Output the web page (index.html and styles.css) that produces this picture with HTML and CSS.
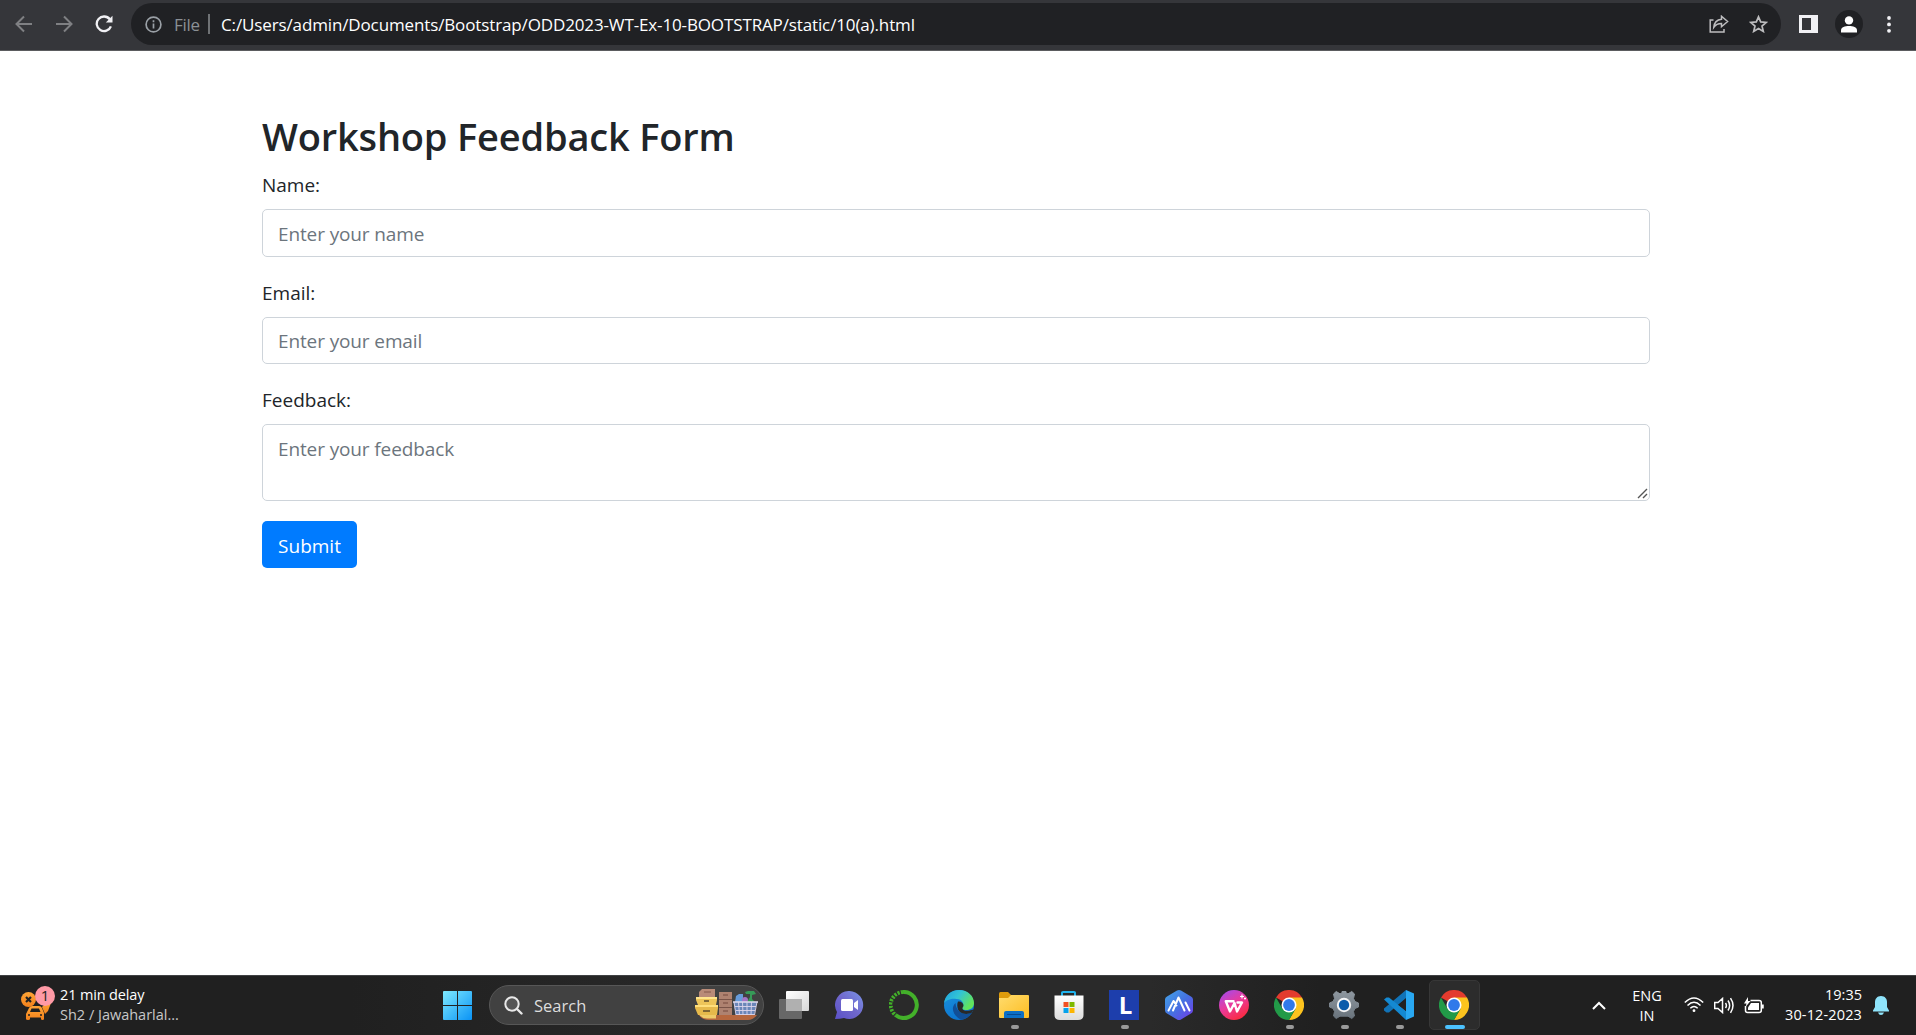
FILE: index.html
```html
<!DOCTYPE html>
<html lang="en">
<head>
<meta charset="utf-8">
<title>Workshop Feedback Form</title>
<link rel="stylesheet" href="styles.css">
</head>
<body>
<svg class="defs" aria-hidden="true">
  <defs>
    <linearGradient id="winG" x1="0" y1="0" x2="1" y2="1"><stop offset="0" stop-color="#7eeaff"/><stop offset="1" stop-color="#0a93f5"/></linearGradient>
    <linearGradient id="chatG" x1="1" y1="0" x2="0" y2="1"><stop offset="0" stop-color="#7a95e8"/><stop offset=".5" stop-color="#7068cc"/><stop offset="1" stop-color="#5a50c8"/></linearGradient>
    <linearGradient id="edgeTop" x1="0" y1="0" x2="1" y2=".5"><stop offset="0" stop-color="#1d9fe0"/><stop offset=".5" stop-color="#32c4d5"/><stop offset="1" stop-color="#62e35b"/></linearGradient>
    <linearGradient id="edgeL" x1="0" y1="0" x2=".6" y2="1"><stop offset="0" stop-color="#1b93dc"/><stop offset="1" stop-color="#0a72cf"/></linearGradient>
    <linearGradient id="foldG" x1="0" y1="0" x2="1" y2="1"><stop offset="0" stop-color="#ffdc6e"/><stop offset="1" stop-color="#fdbd22"/></linearGradient>
    <linearGradient id="bagG" x1="0" y1="0" x2="0" y2="1"><stop offset="0" stop-color="#fff"/><stop offset="1" stop-color="#dcdcdc"/></linearGradient>
    <linearGradient id="hexG" x1="0" y1="0" x2="1" y2="1"><stop offset="0" stop-color="#44a5e8"/><stop offset=".5" stop-color="#4472e2"/><stop offset="1" stop-color="#7438e8"/></linearGradient>
    <linearGradient id="wpsG" x1=".1" y1="0" x2=".7" y2="1"><stop offset="0" stop-color="#a04cf0"/><stop offset=".5" stop-color="#ea3a9b"/><stop offset="1" stop-color="#fb2a3c"/></linearGradient>
    <linearGradient id="gearG" x1="0" y1="0" x2="0" y2="1"><stop offset="0" stop-color="#8e979f"/><stop offset="1" stop-color="#69737c"/></linearGradient>
    <linearGradient id="tvG" x1="0" y1="0" x2="1" y2="1"><stop offset="0" stop-color="#fff"/><stop offset="1" stop-color="#d8d8d8"/></linearGradient>
    <linearGradient id="carG" x1="0" y1="0" x2="0" y2="1"><stop offset="0" stop-color="#ffa536"/><stop offset="1" stop-color="#f2811c"/></linearGradient>
    <symbol id="chrome" viewBox="0 0 30 30">
      <path d="M15 15 2 7.500A15 15 0 0 1 28 7.500Z" fill="#e33b2e"/>
      <path d="M15 7.500H28A15 15 0 0 1 15 30L21.500 18.700Z" fill="#fcc31e"/>
      <path d="M2 7.500A15 15 0 0 0 15 30L21.500 18.700 15 22 8.500 18.700Z" fill="#229a48"/>
      <circle cx="15" cy="15" r="7.500" fill="#fff"/><circle cx="15" cy="15" r="5.900" fill="#3079ea"/>
    </symbol>
  </defs>
</svg>

<header class="toolbar">
  <div class="nav">
    <svg width="18" height="18" viewBox="0 0 18 18" class="dim"><path d="M17 9H1.500M9 1.500 1.500 9 9 16.500"/></svg>
    <svg width="18" height="18" viewBox="0 0 18 18" class="dim"><path d="M1 9h15.500M9 1.500 16.500 9 9 16.500"/></svg>
    <svg width="18" height="18" viewBox="0 0 18 18" class="reload"><path d="M14.800 4.300A7.300 7.300 0 1 0 15.900 11.300"/><path d="M17.500.8v6.700h-6.700Z" class="tip"/></svg>
  </div>
  <div class="omnibox">
    <svg class="info" width="17" height="17" viewBox="0 0 17 17"><circle cx="8.500" cy="8.500" r="7.400"/><path d="M8.500 7.500v5M8.500 4.200v2"/></svg>
    <span class="scheme">File</span>
    <span class="sep"></span>
    <span class="url">C:/Users/admin/Documents/Bootstrap/ODD2023-WT-Ex-10-BOOTSTRAP/static/10(a).html</span>
    <svg class="share" width="20" height="18" viewBox="0 0 20 18"><path d="M4.500 5H1.200v12H15v-3"/><path d="M12.500 1.200 18.600 6.500l-6.100 5.200V8.600C8.500 8.600 6.600 9.800 4.800 12.300 5.200 8 8 4.800 12.500 4.300Z"/></svg>
    <svg class="star" width="19" height="18" viewBox="0 0 19 18"><path d="m9.500 1.800 2.200 5.100 5.500.5-4.200 3.600 1.300 5.400-4.800-2.900-4.800 2.900L6 11 1.800 7.400l5.500-.5Z"/></svg>
  </div>
  <div class="actions">
    <svg width="19" height="18" viewBox="0 0 19 18"><path d="M0 0h19v18H0ZM3 3v12h9V3Z" fill="#f1f1f4" fill-rule="evenodd"/></svg>
    <span class="avatar"><svg width="16" height="17" viewBox="0 0 16 17" fill="#fff"><circle cx="8" cy="4.400" r="4.200"/><path d="M0 16.500v-2.200C0 11.300 4 10 8 10s8 1.300 8 4.300v2.200Z"/></svg></span>
    <svg width="4" height="17" viewBox="0 0 4 17" fill="#f1f1f4"><circle cx="2" cy="2" r="1.900"/><circle cx="2" cy="8.400" r="1.900"/><circle cx="2" cy="14.800" r="1.900"/></svg>
  </div>
</header>

<main class="page">
  <h2>Workshop Feedback Form</h2>
  <form class="form">
    <div class="group"><label for="name">Name:</label><input id="name" class="control" type="text" placeholder="Enter your name"></div>
    <div class="group"><label for="email">Email:</label><input id="email" class="control" type="text" placeholder="Enter your email"></div>
    <div class="group"><label for="feedback">Feedback:</label>
      <div class="area"><textarea id="feedback" class="control" placeholder="Enter your feedback"></textarea>
      <svg class="grip" width="11" height="11" viewBox="0 0 11 11"><path d="M1 10 10 1M6 10l4-4"/></svg></div></div>
    <button class="submit" type="button">Submit</button>
  </form>
</main>

<footer class="taskbar">
  <div class="widget">
    <svg width="34" height="38" viewBox="0 0 34 38">
      <path d="M21 21 24 18l6-1-3 8-3 3Z" fill="url(#carG)"/>
      <path d="M5 28 8 22Q9 20 11 20H18Q20 20 21 22L23 27V33Q23 34 21.500 34T20 33V31.500H9V33Q9 34 7 34T5 33Z" fill="url(#carG)"/>
      <path d="M9 26 10.500 22.500H18L19.500 26Z" fill="#202020"/><circle cx="8" cy="29" r="1" fill="#202020"/><circle cx="20" cy="29" r="1" fill="#202020"/>
      <circle cx="7.500" cy="13.500" r="7.500" fill="url(#carG)"/><path d="m5 11 5 5m0-5-5 5" stroke="#222" stroke-width="2.200"/>
      <circle cx="24" cy="10" r="10" fill="#ff9aa6"/><text x="24" y="15" text-anchor="middle" class="badge">1</text>
    </svg>
    <div class="lines"><span class="headline">21 min delay</span><span class="sub">Sh2 / Jawaharlal...</span></div>
  </div>
  <div class="slot"><svg width="29" height="29" viewBox="0 0 29 29"><path d="M1 0H14V14H0V1Q0 0 1 0ZM15 0H28Q29 0 29 1V14H15ZM0 15H14V29H1Q0 29 0 28ZM15 15H29V28Q29 29 28 29H15Z" fill="url(#winG)"/></svg></div>
  <div class="search">
    <svg width="19" height="19" viewBox="0 0 19 19"><circle cx="8" cy="8" r="6.700" fill="#555" stroke="#e8e8e8" stroke-width="2"/><path d="m13 13 4.500 4.500" stroke="#e8e8e8" stroke-width="2.400" stroke-linecap="round"/></svg>
    <span>Search</span>
    <svg class="boxes" width="63" height="32" viewBox="0 0 63 32">
      <path d="M4 26H62Q58 31 53 31H14Q7 31 4 26Z" fill="#b5673f"/>
      <path d="M3 24H21V29.500H12Q6 29.500 3 24Z" fill="#efcb68"/>
      <path d="M4 3 7 0H20V8H4Z" fill="#b98b78"/><path d="M9 3h7" stroke="#84594a"/>
      <path d="M1 8H22V11L21 16H3L1 11Z" fill="#eec559"/><path d="M1 9H22" stroke="#ffe58c" stroke-width="2"/>
      <path d="M0 16H23V19L22 26H3L0 19Z" fill="#e6b94b"/><path d="M0 17H23" stroke="#ffdf7c" stroke-width="2"/>
      <path d="M9 12h5M8 22h7" stroke="#5e4b2c" stroke-width="1.500"/>
      <path d="M24 3H37V26H24Z" fill="#ae8270"/><path d="M24 10.500H37M24 18.500H37" stroke="#795347"/><path d="M28 6h5m-5 8h5m-5 8h5" stroke="#74493d" stroke-width="1.200"/>
      <path d="M41 7 44 5h4v8H40Z" fill="#669bda"/><path d="M50 3 53 2h6l2 3-4 1v4l3 3H52l3-5V5H51Z" fill="#379a58"/>
      <circle cx="50" cy="11" r="3" fill="#a374c4"/>
      <path d="M38.500 13H62L59 26H41Z" fill="#6a86b8"/><path d="M38 13H63" stroke="#e2dcf0" stroke-width="1.500"/><path d="M39 13 41 26M43.500 13 44.500 26M47.500 13 48 26M52 13V26M56.500 13 56 26M62 13 59.500 26M40 17.500H61M41 21.500H60M41 25.500H59.500" stroke="#dcd6ec" stroke-width=".9"/>
    </svg>
  </div>
  <nav class="apps">
    <div class="slot"><svg width="30" height="28" viewBox="0 0 30 28"><rect x="7" y="0" width="23" height="20" rx="1" fill="url(#tvG)"/><rect x="0" y="8" width="23" height="20" rx="1" fill="#777" fill-opacity=".8"/><path d="M7 8h16v12H7Z" fill="#b0b0b0"/></svg></div>
    <div class="slot"><svg width="29" height="28" viewBox="0 0 29 28"><path d="M14.500 0A14 14 0 1 1 9 27Q5 28 0 28L2 21A14 14 0 0 1 14.500 0Z" fill="url(#chatG)"/><rect x="6" y="8" width="12" height="12" rx="1.500" fill="#fff"/><path d="M19 12 23 9V19L19 16Z" fill="#fff"/></svg></div>
    <div class="slot"><svg width="30" height="30" viewBox="0 0 30 30" fill="none" stroke="#43b02a" stroke-width="4"><path d="M14 2A13 13 0 1 1 6.500 25"/><path d="M14 2A13 13 0 0 0 6.500 25" stroke-dasharray="2.200 1.200"/><path d="M12.500 4.500A11 11 0 0 0 6 22" stroke="#292929" stroke-width="1" stroke-dasharray="2 2.200"/></svg></div>
    <div class="slot"><svg width="30" height="30" viewBox="0 0 30 30"><circle cx="15" cy="15" r="15" fill="url(#edgeL)"/><path d="M0 13.500C1 5 7.500 0 15 0 24 0 30 6 30 13c0 5-4 7-7.500 7-4 0-5-1.500-4-3 2-3 0-8-6-8C6 8 1 11 0 13.500Z" fill="url(#edgeTop)"/><path d="M11.500 13C7 17 8 25 17 29.800 22 29 26 26 28 22.500 20 26 12 22 11.500 13Z" fill="#114f97"/><path d="M14 11.500c3-.5 5.500 1.500 5.500 4 0 1.500-1.500 2-1 3.500 1 2.500 6 2 11 .5l-1.500 3c-6 3-12 1-14-3-1-3-1-6 0-8Z" fill="#292929"/></svg></div>
    <div class="slot run"><svg width="30" height="27" viewBox="0 0 30 27"><path d="M0 1.500Q0 0 1.500 0H9L13 4V9H0Z" fill="#dd9b0c"/><path d="M0 6H9L12 3H29Q30 3 30 4V25Q30 26 29 26H1Q0 26 0 25Z" fill="url(#foldG)"/><path d="M5 26V21Q5 19 7 19H23Q25 19 25 21V26Z" fill="#0c6fc5"/><path d="M8 22.500H22" stroke="#064b91"/></svg></div>
    <div class="slot"><svg width="30" height="30" viewBox="0 0 30 30"><path d="M8 7V2.500Q8 2 9 2H20Q21 2 21 2.500V7" fill="none" stroke="#21b4ee" stroke-width="2"/><path d="M.5 5.500H29.500V25Q29.500 30 24 30H6Q.5 30 .5 25Z" fill="url(#bagG)"/><path d="M9.500 12h5v5h-5Z" fill="#f15022"/><path d="M15.500 12h5v5h-5Z" fill="#7db900"/><path d="M9.500 18h5v5h-5Z" fill="#06a2ec"/><path d="M15.500 18h5v5h-5Z" fill="#fcb500"/></svg></div>
    <div class="slot run"><span class="ltile">L</span></div>
    <div class="slot"><svg width="28" height="30" viewBox="0 0 28 30"><path d="M12 .6Q14-.4 16 .6L26 6.500Q28 7.500 28 9.500V20.500Q28 22.500 26 23.500L16 29.400Q14 30.400 12 29.400L2 23.500Q0 22.500 0 20.500V9.500Q0 7.500 2 6.500Z" fill="url(#hexG)"/><path d="M3.500 20.500 8.500 11M8 20.500 13.500 7.500l6 13M20.500 12.500l4 8M9 11.500l2.500 4" fill="none" stroke="#fff" stroke-width="2" stroke-linecap="round" stroke-linejoin="round"/></svg></div>
    <div class="slot"><svg width="30" height="30" viewBox="0 0 30 30"><circle cx="15" cy="15" r="15" fill="url(#wpsG)"/><path d="M14.500 11.200H6.800L11 21.500 15.500 13 18 21.500 23 12.500H18.500" fill="none" stroke="#fff" stroke-width="2.400" stroke-linejoin="round" stroke-linecap="round"/><path d="M23 4.500v4m-2-2h4M26 7.500v2m-1-1h2" stroke="#fff" stroke-width="1.200"/></svg></div>
    <div class="slot run"><svg width="30" height="30"><use href="#chrome"/></svg></div>
    <div class="slot run"><svg width="30" height="30" viewBox="0 0 30 30"><path d="M7.200 1.500 11 3.800 13 3V1.500H17V3L19 3.800 22.800 1.500 25.500 4 24.500 8.500 26 11.500 29.500 13V17L26 18.500 24.500 21.500 25.500 26 22.800 28.500 19 26.200H11L7.200 28.500 4.500 26 5.500 21.500 4 18.500 .5 17V13L4 11.500 5.500 8.500 4.500 4Z" fill="url(#gearG)" stroke="url(#gearG)" stroke-linejoin="round" stroke-width="1"/><circle cx="15" cy="15" r="7.200" fill="#f5f5f5"/><circle cx="15" cy="15" r="5.200" fill="#0b5cab"/></svg></div>
    <div class="slot run"><svg width="30" height="30" viewBox="0 0 30 30"><path d="M22 0V8L5 22.500H2.500L0 20.500V18.500Z" fill="#1173b7"/><path d="M0 9.500 2.500 7.500H5L22 21V30Z" fill="#1489d2"/><path d="M22 0 30 3.500V26.500L22 30Z" fill="#29a8f2"/><path d="M22 9V21L14.500 15Z" fill="#222"/></svg></div>
    <div class="slot run active"><svg width="30" height="30"><use href="#chrome"/></svg></div>
  </nav>
  <div class="tray">
    <svg class="chev" width="14" height="9" viewBox="0 0 14 9"><path d="m1 8 6-6 6 6"/></svg>
    <div class="lines lang"><span>ENG</span><span>IN</span></div>
    <div class="status">
      <svg width="20" height="16" viewBox="0 0 20 16"><path d="M.8 5.500Q10-3.500 19.200 5.500M3.500 8.500Q10 2 16.500 8.500M6.300 11.300Q10 7.800 13.700 11.300"/><circle cx="10" cy="13.700" r="1.400" class="full"/></svg>
      <svg width="20" height="17" viewBox="0 0 20 17"><path d="M.7 5.500H4L8.500 1.500V15.500L4 11.500H.7ZM11.500 6Q13.300 8.500 11.500 11M14 3.500Q17.300 8.500 14 13.500M16.500 1.200Q21.500 8.500 16.500 15.800"/></svg>
      <svg width="20" height="17" viewBox="0 0 20 17"><path d="M6.500 3.500H15Q17.300 3.500 17.300 5.500V13.500Q17.300 15.500 15 15.500H3.500Q1.500 15.500 1.500 13.500V9"/><path d="M7 6H15V13H4V10.500Z" class="full"/><path d="M18.500 7.500V11.500" stroke-width="2.500"/><path d="M4 0 0 6.500H2.500L1.500 10 6.500 4H4Z" class="full"/></svg>
    </div>
    <div class="lines clock"><span>19:35</span><span class="date">30-12-2023</span></div>
    <svg class="bell" width="16" height="19" viewBox="0 0 16 19"><path d="M8 0C4 0 2 3 2 6V11L0 14.500V15.500H16V14.500L14 11V6C14 3 12 0 8 0ZM5 16.500H11Q10 19 8 19T5 16.500Z" fill="#8fe4fb"/></svg>
  </div>
</footer>
</body>
</html>
```
FILE: styles.css
```css
* { box-sizing: border-box; }
body {
  margin: 0;
  height: 1035px;
  overflow: hidden;
  display: flex;
  flex-direction: column;
  background: #fff;
  color: #212529;
  font-family: "Open Sans", "Noto Sans", sans-serif;
}
svg { display: block; flex: none; }
.defs { position: absolute; width: 0; height: 0; }

.toolbar {
  height: 51px;
  flex: none;
  display: flex;
  align-items: flex-start;
  background: #35363a;
  border-bottom: 1px solid #5b5c5f;
}
.nav {
  width: 131px;
  height: 48px;
  padding-left: 15px;
  display: flex;
  align-items: center;
  gap: 22px;
}
.nav svg { fill: none; stroke-width: 2; }
.nav .dim { stroke: #7f8083; }
.nav .reload { stroke: #f1f1f4; stroke-width: 2.3; }
.nav .tip { fill: #f1f1f4; stroke: none; }
.omnibox {
  width: 1650px;
  height: 42px;
  margin-top: 3px;
  padding: 0 13px 0 14px;
  border-radius: 21px;
  background: #202124;
  display: flex;
  align-items: center;
  white-space: nowrap;
  font-size: 17px;
}
.info { fill: none; stroke: #9aa0a6; stroke-width: 1.7; }
.scheme { margin-left: 12px; width: 34px; color: #8b9095; letter-spacing: -.3px; }
.sep { width: 2px; height: 20px; background: #6f7275; }
.url { margin-left: 11px; color: #fff; letter-spacing: -.13px; }
.share, .star { fill: none; stroke: #bdbdbf; stroke-width: 1.5; }
.share { margin-left: auto; }
.star { margin-left: 20px; stroke-width: 1.7; }
.actions {
  height: 48px;
  display: flex;
  align-items: center;
  padding-left: 18px;
}
.avatar {
  width: 28px;
  height: 28px;
  margin: 0 24px 0 17px;
  border-radius: 50%;
  background: #202124;
  display: grid;
  place-items: center;
}

.page { flex: 1; padding: 60px 266px 0 262px; }
h2 {
  margin: 0 0 8px;
  font-size: 38px;
  line-height: 50px;
  font-weight: 600;
  letter-spacing: -.18px;
}
.form { display: flex; flex-direction: column; align-items: stretch; }
.group { display: flex; flex-direction: column; margin-bottom: 20px; }
.group label { font-size: 19px; line-height: 32px; margin-bottom: 8px; }
.control {
  display: block;
  width: 100%;
  height: 47.5px;
  padding: 8.5px 15px 6.5px;
  border: 1px solid #ced4da;
  border-radius: 5px;
  background: #fff;
  font: 19px/30px "Open Sans", "Noto Sans", sans-serif;
  letter-spacing: -.12px;
}
.control::placeholder { color: #6c757d; opacity: 1; }
.area { position: relative; }
textarea.control { height: 77px; resize: none; overflow: hidden; }
.grip { position: absolute; right: 2px; bottom: 2px; fill: none; stroke: #555; stroke-width: 1.4; }
.submit {
  align-self: flex-start;
  width: 95px;
  height: 47px;
  padding: 2px 0 0;
  border: 0;
  border-radius: 5px;
  background: #007bff;
  color: #fff;
  font: 19px/30px "Open Sans", "Noto Sans", sans-serif;
}

.taskbar {
  height: 60px;
  flex: none;
  display: flex;
  align-items: center;
  padding-bottom: 1px;
  border-top: 1px solid #404244;
  background: linear-gradient(90deg, #202020 0, #202020 350px, #2a2a2a 760px, #2a2a2a 1150px, #202020 1320px);
  color: #fff;
  font-size: 14.5px;
}
.widget { width: 430px; padding-left: 21px; display: flex; align-items: center; gap: 5px; }
.badge { font: 15px "Open Sans", sans-serif; fill: #222; }
.lines { display: flex; flex-direction: column; line-height: 20px; white-space: nowrap; }
.headline { letter-spacing: -.15px; }
.sub { color: #c8c8c8; }
.slot { position: relative; width: 55px; height: 50px; display: grid; place-items: center; }
.search {
  width: 275px;
  height: 40px;
  margin-left: 4px;
  padding: 0 5px 0 14px;
  border: 1px solid #575757;
  border-radius: 20px;
  background: #414141;
  display: flex;
  align-items: center;
  font-size: 16.5px;
  color: #ddd;
}
.search span { margin-left: 11px; }
.boxes { margin-left: auto; }
.apps { display: flex; margin-left: 2.5px; }
.run::after {
  content: "";
  position: absolute;
  left: 24px;
  bottom: 1px;
  width: 8px;
  height: 4px;
  border-radius: 2px;
  background: #9a9a9a;
}
.active::before {
  content: "";
  position: absolute;
  inset: 0 2px;
  border: 1px solid #373737;
  border-radius: 5px;
  background: #2c2c2c;
}
.active svg { position: relative; }
.active::after { left: 18px; width: 20px; background: #4cc2ff; }
.ltile {
  width: 30px;
  height: 30px;
  background: #1d3eac;
  font: bold 24px/29px "Open Sans", sans-serif;
  text-align: center;
  padding-left: 3px;
}
.tray { margin-left: auto; padding-right: 27px; display: flex; align-items: center; }
.chev { fill: none; stroke: #fff; stroke-width: 2; }
.lang { align-items: center; width: 40px; margin-left: 21px; padding-top: 2px; }
.status { display: flex; align-items: center; gap: 10px; margin-left: 17px; }
.status svg { fill: none; stroke: #fff; stroke-width: 1.5; }
.status .full { fill: #fff; stroke: none; }
.clock { align-items: flex-end; margin-left: 21px; width: 77px; }
.date { letter-spacing: .13px; }
.bell { margin-left: 11px; }
```
